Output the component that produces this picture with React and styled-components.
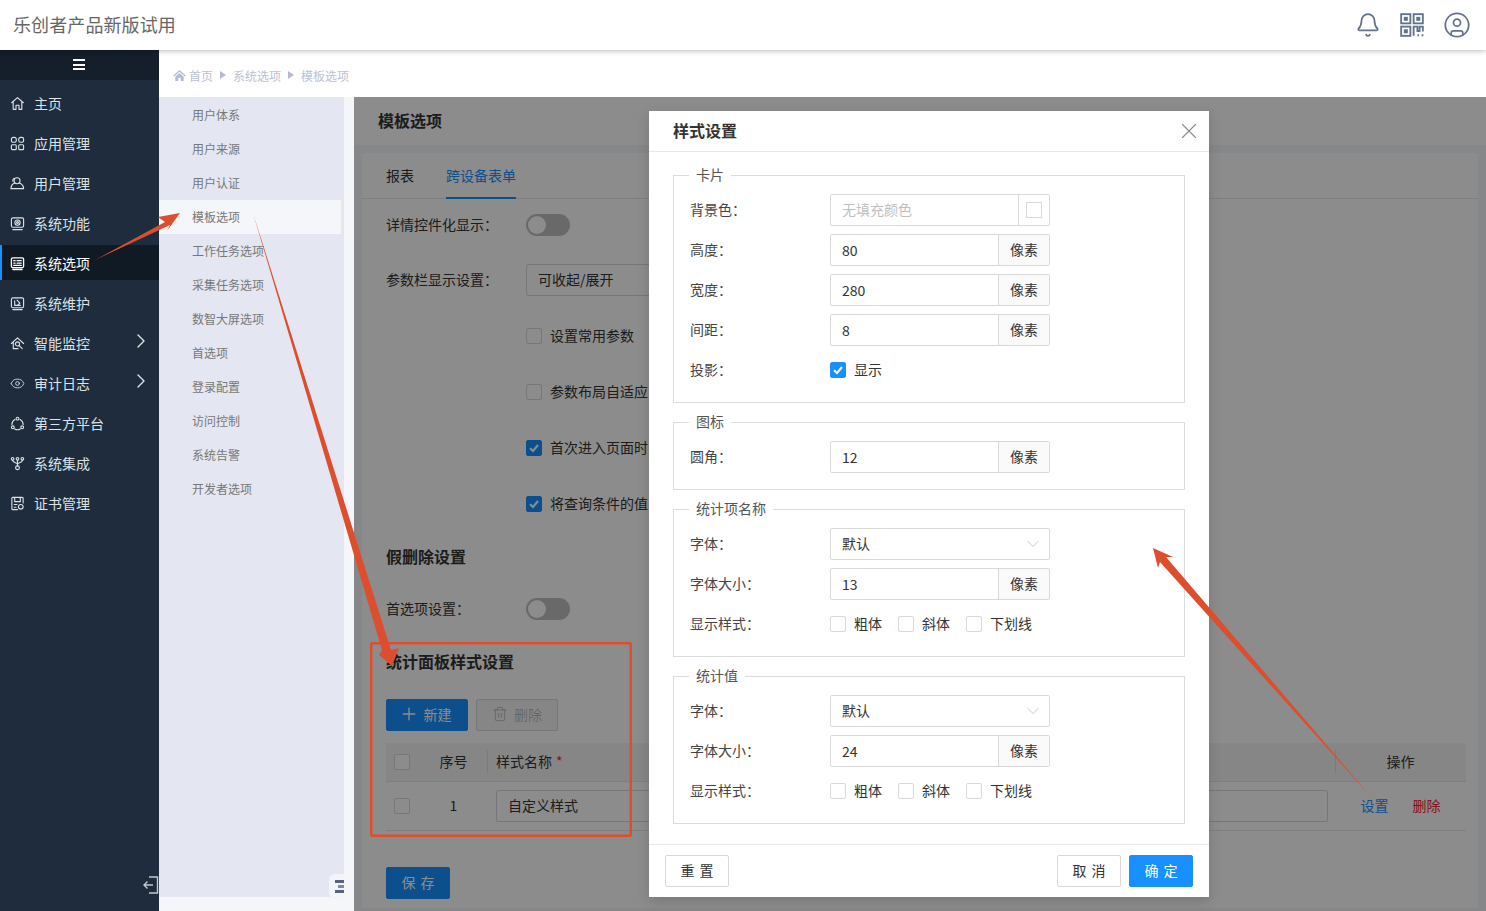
import React from "react";
import styled, { createGlobalStyle } from "styled-components";
import { Bell, CircleUser, Eye, Plus, Trash2, X, ChevronDown, ChevronRight } from "lucide-react";

const Global = createGlobalStyle`
  html, body { margin: 0; padding: 0; height: 100%; overflow: hidden; background: #fff; }
  body, button, input { font-family: "Noto Sans CJK SC", "Noto Sans", sans-serif; font-size: 14px; }
  * { box-sizing: border-box; }
`;

const Page = styled.div`
  position: relative;
  width: 1486px;
  height: 911px;
  display: flex;
  flex-direction: column;
  overflow: hidden;
`;
const Header = styled.header`
  position: relative;
  z-index: 3;
  height: 50px;
  flex: none;
  background: #fff;
  box-shadow: 0 1px 5px rgba(0, 0, 0, 0.28);
  display: flex;
  align-items: center;
  justify-content: space-between;
  padding: 0 15px 0 13px;
`;
const AppTitle = styled.div`
  font-size: 18px;
  color: #666;
  padding-bottom: 2px;
  letter-spacing: 0.1px;
`;
const HeaderIcons = styled.div`
  display: flex;
  align-items: center;
  gap: 18px;
  color: #62728a;
`;
const Body = styled.div`
  flex: 1;
  display: flex;
  min-height: 0;
`;
const Sidebar = styled.aside`
  position: relative;
  width: 159px;
  flex: none;
  background: #1e2c3d;
  display: flex;
  flex-direction: column;
`;
const BurgerBar = styled.div`
  height: 30px;
  background: #141f2b;
  display: flex;
  flex-direction: column;
  align-items: center;
  justify-content: center;
  gap: 2.5px;
  margin-bottom: 3px;
  padding: 0 1px 1px 0;
  span { display: block; width: 12px; height: 2px; background: #fff; }
`;
const MenuItem = styled.div`
  display: flex;
  align-items: center;
  gap: 9px;
  padding-left: ${(p) => (p.$active ? "8px" : "10px")};
  height: ${(p) => (p.$active ? "35px" : "40px")};
  margin: ${(p) => (p.$active ? "2px 0 3px" : "0")};
  padding-top: ${(p) => (p.$active ? "1px" : "0")};
  color: ${(p) => (p.$active ? "#fff" : "#dde3e9")};
  background: ${(p) => (p.$active ? "#101a24" : "transparent")};
  border-left: ${(p) => (p.$active ? "2px solid #1890ff" : "none")};
  position: relative;
  svg { flex: none; }
`;
const MenuArrow = styled.span`
  position: absolute;
  right: 6px;
  top: 6px;
  display: flex;
  color: #dde3e9;
`;
const Collapse = styled.span`
  position: absolute;
  right: 0;
  bottom: 17px;
  display: flex;
  color: #c4c8cd;
`;
const Workspace = styled.div`
  flex: 1;
  display: flex;
  flex-direction: column;
  min-width: 0;
`;
const Crumbs = styled.nav`
  height: 47px;
  flex: none;
  background: #fff;
  display: flex;
  align-items: center;
  padding: 3px 0 0 14px;
  font-size: 12px;
  color: #bcc1d3;
`;
const CrumbSep = styled.span`
  width: 0;
  height: 0;
  margin: 0 7px;
  border-left: 6px solid #b4bad0;
  border-top: 4px solid transparent;
  border-bottom: 4px solid transparent;
`;
const CrumbHome = styled.span`
  display: flex;
  margin-right: 3px;
  color: #b4bad0;
`;
const WorkRow = styled.div`
  flex: 1;
  display: flex;
  background: #f5f6fa;
  min-height: 0;
`;
const SubNav = styled.div`
  position: relative;
  width: 185px;
  flex: none;
  margin: 0 10px 14px 0;
  background: #e4e7f1;
  padding: 1px 3px 0 0;
`;
const SubItem = styled.div`
  height: 34px;
  display: flex;
  align-items: center;
  padding: 0 0 1px 33px;
  font-size: 12px;
  color: #777;
  background: ${(p) => (p.$active ? "#f5f6fa" : "transparent")};
`;
const SubToggle = styled.div`
  position: absolute;
  right: 0;
  bottom: -2px;
  width: 15px;
  height: 25px;
  background: #f3f4f9;
  border-radius: 6px 0 0 6px;
  display: flex;
  flex-direction: column;
  justify-content: center;
  align-items: flex-end;
  gap: 2.5px;
  span { display: block; height: 2.5px; width: 9px; background: #56637a; }
  span:nth-child(2) { width: 6px; background: #7f8aa0; }
`;
const Main = styled.main`
  position: relative;
  flex: 1;
  min-width: 0;
  display: flex;
  flex-direction: column;
`;
const PageHead = styled.div`
  height: 48px;
  flex: none;
  background: #fff;
  display: flex;
  align-items: center;
  padding: 0 0 2px 24px;
  font-size: 16px;
  font-weight: 700;
  color: #333;
`;
const Card = styled.section`
  flex: 1;
  margin: 8px 8px 3px;
  padding: 0 12px 0 24px;
  background: #fff;
  border-radius: 4px;
  color: #333;
`;
const Tabs = styled.div`
  height: 46px;
  margin: 0 -12px 10px -24px;
  padding-left: 24px;
  display: flex;
  gap: 32px;
  border-bottom: 1px solid #e8e8e8;
`;
const Tab = styled.div`
  height: 46px;
  padding-top: 11px;
  line-height: 22px;
  color: ${(p) => (p.$active ? "#1890ff" : "#333")};
  border-bottom: ${(p) => (p.$active ? "2px solid #1890ff" : "none")};
`;
const FormRow = styled.div`
  display: flex;
  align-items: center;
  height: 32px;
  margin-bottom: ${(p) => p.$gap ?? 24}px;
  padding-left: ${(p) => (p.$indent ? "140px" : "0")};
  white-space: nowrap;
`;
const RowLabel = styled.span`
  width: 140px;
  flex: none;
  padding-bottom: 2px;
`;
const Toggle = styled.span`
  position: relative;
  width: 44px;
  height: 22px;
  border-radius: 11px;
  background: #bfbfbf;
  &::after {
    content: "";
    position: absolute;
    left: 2px;
    top: 2px;
    width: 18px;
    height: 18px;
    border-radius: 50%;
    background: #fff;
  }
`;
const PageSelect = styled.div`
  width: 300px;
  height: 32px;
  padding: 0 0 2px 11px;
  display: flex;
  align-items: center;
  border: 1px solid #d9d9d9;
  border-radius: 2px;
`;
const Box = styled.span`
  width: 16px;
  height: 16px;
  flex: none;
  display: inline-flex;
  align-items: center;
  justify-content: center;
  border: 1px solid ${(p) => (p.$on ? "#1890ff" : "#d9d9d9")};
  border-radius: 2px;
  background: ${(p) => (p.$on ? "#1890ff" : "#fff")};
`;
const CheckLabel = styled.span`
  display: inline-flex;
  align-items: center;
  gap: 8px;
  padding-bottom: 2px;
  ${Box} { margin-top: 2px; }
`;
const Heading = styled.h3`
  margin: 0 0 ${(p) => p.$after}px;
  height: 24px;
  line-height: 22px;
  font-size: 16px;
  font-weight: 700;
  color: #333;
`;
const Toolbar = styled.div`
  display: flex;
  gap: 8px;
  margin-bottom: 12px;
`;
const Btn = styled.button`
  height: 32px;
  width: ${(p) => p.$w}px;
  padding: 0 ${(p) => p.$right ?? 0}px 2px 0;
  display: inline-flex;
  align-items: center;
  justify-content: center;
  gap: ${(p) => p.$gap ?? 0}px;
  border-radius: 2px;
  word-spacing: 2px;
  border: 1px solid ${(p) => (p.$primary ? "#1890ff" : "#d9d9d9")};
  background: ${(p) => (p.$primary ? "#1890ff" : p.$disabled ? "#f5f5f5" : "#fff")};
  color: ${(p) => (p.$primary ? "#fff" : p.$disabled ? "rgba(0,0,0,.25)" : "#333")};
`;
const TableRow = styled.div`
  display: grid;
  grid-template-columns: 34px 67px 1fr 131px;
  align-items: center;
  height: ${(p) => (p.$head ? "39px" : "49px")};
  background: ${(p) => (p.$head ? "#f5f5f5" : "transparent")};
  border-bottom: 1px solid #e8e8e8;
`;
const CheckCell = styled.div`
  padding-left: 8px;
  display: flex;
`;
const IndexCell = styled.div`
  text-align: center;
  padding-bottom: 2px;
`;
const NameCell = styled.div`
  position: relative;
  padding: 0 7px ${(p) => (p.$head ? "2px" : "0")} 9px;
  &::before {
    content: ${(p) => (p.$head ? '""' : "none")};
    position: absolute;
    left: 0;
    top: -1px;
    width: 1px;
    height: 23px;
    background: #e0e0e0;
  }
`;
const Required = styled.span`
  color: #f5222d;
  margin-left: 4px;
`;
const ActionHead = styled.div`
  position: relative;
  text-align: center;
  padding-bottom: 2px;
  &::before {
    content: "";
    position: absolute;
    left: 0;
    top: -1px;
    width: 1px;
    height: 23px;
    background: #e0e0e0;
  }
`;
const Actions = styled.div`
  display: flex;
  justify-content: center;
  gap: 24px;
  padding-bottom: 2px;
`;
const LinkText = styled.span`
  color: ${(p) => (p.$danger ? "#f5222d" : "#1890ff")};
`;
const NameInput = styled.div`
  height: 32px;
  padding: 0 0 2px 11px;
  display: flex;
  align-items: center;
  border: 1px solid #d9d9d9;
  border-radius: 2px;
`;
const SaveRow = styled.div`
  margin-top: 36px;
`;
const Mask = styled.div`
  position: absolute;
  inset: 0;
  background: rgba(0, 0, 0, 0.45);
`;
const Modal = styled.div`
  position: absolute;
  left: 295px;
  top: 14px;
  width: 560px;
  height: 786px;
  background: #fff;
  box-shadow: 0 4px 12px rgba(0, 0, 0, 0.15);
  display: flex;
  flex-direction: column;
  color: #333;
`;
const ModalHead = styled.div`
  height: 41px;
  flex: none;
  padding: 0 7px 2px 24px;
  display: flex;
  align-items: center;
  justify-content: space-between;
  border-bottom: 1px solid #e8e8e8;
  font-size: 16px;
  font-weight: 700;
  color: #333;
  svg { color: #8c8c8c; margin-top: 2px; }
`;
const ModalBody = styled.div`
  flex: 1;
  padding: 13px 24px 0;
`;
const Group = styled.fieldset`
  margin: 0 0 9px;
  padding: 9px 16px 16px;
  min-width: 0;
  border: 1px solid #dcdcdc;
  display: flex;
  flex-direction: column;
  gap: 8px;
`;
const GroupTitle = styled.legend`
  margin-left: -1px;
  padding: 0 7px;
  line-height: 18px;
  height: 20px;
  color: #555;
`;
const FieldRow = styled.div`
  display: flex;
  align-items: center;
  height: 32px;
`;
const FieldLabel = styled.span`
  width: 140px;
  flex: none;
  color: #444;
  padding-bottom: 2px;
`;
const InputGroup = styled.div`
  width: 220px;
  height: 32px;
  display: flex;
  border: 1px solid #d9d9d9;
  border-radius: 2px;
`;
const InputText = styled.div`
  flex: 1;
  padding: 0 6px ${(p) => (p.$raised ? "2px" : "0")} 11px;
  color: ${(p) => (p.$placeholder ? "#bfbfbf" : "#333")};
  display: flex;
  justify-content: space-between;
  align-items: center;
  svg { color: #bfbfbf; margin-top: 2px; }
`;
const Unit = styled.div`
  width: 51px;
  flex: none;
  text-align: center;
  line-height: 28px;
  background: #fafafa;
  border-left: 1px solid #d9d9d9;
  color: #333;
`;
const Swatch = styled.div`
  width: 31px;
  flex: none;
  display: flex;
  align-items: center;
  justify-content: center;
  border-left: 1px solid #d9d9d9;
  span { width: 16px; height: 16px; border: 1px solid #d9d9d9; }
`;
const CheckGroup = styled.div`
  display: flex;
  gap: 16px;
`;
const ModalFoot = styled.div`
  height: 53px;
  flex: none;
  padding: 10px 16px;
  display: flex;
  align-items: center;
  border-top: 1px solid #e8e8e8;
  gap: 8px;
`;
const Spacer = styled.div`
  flex: 1;
`;
const Annotations = styled.svg`
  position: absolute;
  left: 0;
  top: 0;
  z-index: 5;
  pointer-events: none;
`;

const Ico = ({ children, size = 15, sw = 1.2 }) => (
  <svg width={size} height={size} viewBox="0 0 16 16" fill="none" stroke="currentColor" strokeWidth={sw} strokeLinecap="round" strokeLinejoin="round">
    {children}
  </svg>
);

const Check = () => (
  <svg width="12" height="12" viewBox="0 0 12 12" fill="none" stroke="#fff" strokeWidth="2">
    <path d="M2 6.2 5 9l5-6" />
  </svg>
);

const menu = [
  ["主页", <Ico key="a"><path d="M1.800 7.200 8 1.800l6.200 5.400M3.400 6.200v8h3v-4.400h3.200v4.400h3v-8" /></Ico>],
  ["应用管理", <Ico key="b"><rect x="1.500" y="1.500" width="5.200" height="5.200" rx="2" /><rect x="9.300" y="1.500" width="5.200" height="5.200" rx="2" /><rect x="1.500" y="9.300" width="5.200" height="5.200" rx="1" /><rect x="9.300" y="9.300" width="5.200" height="5.200" rx="1" /></Ico>],
  ["用户管理", <Ico key="c"><circle cx="7.500" cy="5" r="3.200" /><path d="M5 7.500C2.500 8.500 1 10.500 1 13.500h13.500c0-3-1.800-5-4.500-6" /><path d="M4.500 2.500C3.300 3 2.800 4 3 5.500" /></Ico>],
  ["系统功能", <Ico key="d"><rect x="1.500" y="2" width="13" height="10" rx="1.500" /><circle cx="8" cy="7" r="2.800" /><circle cx="8" cy="7" r="1" /><path d="M3 14.500h10" /></Ico>],
  ["系统选项", <Ico key="e" sw={1.4}><rect x="1.500" y="2" width="13" height="10.500" rx="1.500" /><path d="M4 5h1.500M4 7.500h1.500M7.500 5h4.500M7.500 7.500h4.500M4 10h8" /><path d="M3 14.500h10" /></Ico>],
  ["系统维护", <Ico key="f"><rect x="1.500" y="2" width="13" height="10.500" rx="1.500" /><path d="M5 5v5h6M7.500 4.500l3 3-2 2" /><path d="M3 14.500h10" /></Ico>],
  ["智能监控", <Ico key="g"><path d="M1.500 8 8 2l6.500 6M3.500 7v6.500h5" /><circle cx="8" cy="8.500" r="2.200" /><path d="m9.800 10.300 3.200 3.200" /></Ico>, true],
  ["审计日志", <Eye key="h" size={15} strokeWidth={1.400} />, true],
  ["第三方平台", <Ico key="i"><circle cx="8" cy="2.800" r="1.500" /><circle cx="3" cy="12" r="1.500" /><circle cx="13" cy="12" r="1.500" /><path d="M5.300 3.800A6 6 0 0 0 2 9M10.700 3.800A6 6 0 0 1 14 9M5 13.800a6 6 0 0 0 6 0" /></Ico>],
  ["系统集成", <Ico key="j"><circle cx="2.800" cy="3" r="1.400" /><circle cx="8" cy="3" r="1.400" /><circle cx="13.200" cy="3" r="1.400" /><circle cx="8" cy="12.500" r="2" /><path d="M8 4.500v6M2.800 4.500c0 3 5.200 2.500 5.200 4.500 0-2 5.200-1.500 5.200-4.500" /></Ico>],
  ["证书管理", <Ico key="k"><path d="M14 7.500V2.500a1 1 0 0 0-1-1H3a1 1 0 0 0-1 1v11a1 1 0 0 0 1 1h5" /><path d="M5 1.800v4.200h6V1.800M4.500 9h3M4.500 12h2" /><circle cx="11.500" cy="11.500" r="2.500" /></Ico>],
];

const subs = ["用户体系", "用户来源", "用户认证", "模板选项", "工作任务选项", "采集任务选项", "数智大屏选项", "首选项", "登录配置", "访问控制", "系统告警", "开发者选项"];

const Num = ({ label, value }) => (
  <FieldRow>
    <FieldLabel>{label}：</FieldLabel>
    <InputGroup>
      <InputText>{value}</InputText>
      <Unit>像素</Unit>
    </InputGroup>
  </FieldRow>
);

const FontSelect = () => (
  <FieldRow>
    <FieldLabel>字体：</FieldLabel>
    <InputGroup>
      <InputText $raised>默认<ChevronDown size={20} strokeWidth={1} /></InputText>
    </InputGroup>
  </FieldRow>
);

const StyleChecks = () => (
  <FieldRow>
    <FieldLabel>显示样式：</FieldLabel>
    <CheckGroup>
      <CheckLabel><Box />粗体</CheckLabel>
      <CheckLabel><Box />斜体</CheckLabel>
      <CheckLabel><Box />下划线</CheckLabel>
    </CheckGroup>
  </FieldRow>
);

export default function App() {
  return (
    <Page>
      <Global />
      <Header>
        <AppTitle>乐创者产品新版试用</AppTitle>
        <HeaderIcons>
          <Bell size={26} strokeWidth={1.600} />
          <svg width="26" height="26" viewBox="0 0 24 24" fill="none" stroke="currentColor" strokeWidth="1.700">
            <rect x="2" y="2" width="8.500" height="8.500" /><rect x="13.500" y="2" width="8.500" height="8.500" /><rect x="2" y="13.500" width="8.500" height="8.500" />
            <rect x="5.300" y="5.300" width="2" height="2" fill="currentColor" /><rect x="16.800" y="5.300" width="2" height="2" fill="currentColor" /><rect x="5.300" y="16.800" width="2" height="2" fill="currentColor" />
            <path d="M13.500 22v-8.500h3.500v4h2v-4h3v4.500M17 21.500h1.500M21 21.500h1.500" />
          </svg>
          <CircleUser size={28} strokeWidth={1.500} />
        </HeaderIcons>
      </Header>
      <Body>
        <Sidebar>
          <BurgerBar><span /><span /><span /></BurgerBar>
          {menu.map(([text, icon, more]) => (
            <MenuItem key={text} $active={text === "系统选项"}>
              {icon}
              {text}
              {more && <MenuArrow><ChevronRight size={24} strokeWidth={1.400} /></MenuArrow>}
            </MenuItem>
          ))}
          <Collapse>
            <svg width="16" height="18" viewBox="0 0 16 18" fill="none" stroke="currentColor" strokeWidth="1.400">
              <path d="M6 1h8.500v16H6M1 9h9M4.500 5.500 1 9l3.500 3.500" />
            </svg>
          </Collapse>
        </Sidebar>
        <Workspace>
          <Crumbs>
            <CrumbHome>
              <svg width="13" height="13" viewBox="0 0 13 13" fill="currentColor">
                <path d="M6.500 1 0.300 6.500l.8.900L6.500 2.700l5.400 4.700.8-.9z" />
                <path d="M2.300 7.700 6.500 4l4.200 3.700V12H7.800V8.800H5.200V12H2.300z" />
              </svg>
            </CrumbHome>
            首页<CrumbSep />系统选项<CrumbSep />模板选项
          </Crumbs>
          <WorkRow>
            <SubNav>
              {subs.map((s) => (
                <SubItem key={s} $active={s === "模板选项"}>{s}</SubItem>
              ))}
              <SubToggle><span /><span /><span /></SubToggle>
            </SubNav>
            <Main>
              <PageHead>模板选项</PageHead>
              <Card>
                <Tabs>
                  <Tab>报表</Tab>
                  <Tab $active>跨设备表单</Tab>
                </Tabs>
                <FormRow $gap={23}><RowLabel>详情控件化显示：</RowLabel><Toggle /></FormRow>
                <FormRow><RowLabel>参数栏显示设置：</RowLabel><PageSelect>可收起/展开</PageSelect></FormRow>
                <FormRow $indent><CheckLabel><Box />设置常用参数</CheckLabel></FormRow>
                <FormRow $indent><CheckLabel><Box />参数布局自适应</CheckLabel></FormRow>
                <FormRow $indent><CheckLabel><Box $on><Check /></Box>首次进入页面时</CheckLabel></FormRow>
                <FormRow $indent $gap={25}><CheckLabel><Box $on><Check /></Box>将查询条件的值</CheckLabel></FormRow>
                <Heading $after={24}>假删除设置</Heading>
                <FormRow $gap={25}><RowLabel>首选项设置：</RowLabel><Toggle /></FormRow>
                <Heading $after={25}>统计面板样式设置</Heading>
                <Toolbar>
                  <Btn $primary $w={82} $gap={5} $right={4}><Plus size={20} strokeWidth={1.600} />新建</Btn>
                  <Btn $disabled $w={82} $gap={6}><Trash2 size={16} strokeWidth={1.300} />删除</Btn>
                </Toolbar>
                <TableRow $head>
                  <CheckCell><Box /></CheckCell>
                  <IndexCell>序号</IndexCell>
                  <NameCell $head>样式名称<Required>*</Required></NameCell>
                  <ActionHead>操作</ActionHead>
                </TableRow>
                <TableRow>
                  <CheckCell><Box /></CheckCell>
                  <IndexCell>1</IndexCell>
                  <NameCell><NameInput>自定义样式</NameInput></NameCell>
                  <Actions><LinkText>设置</LinkText><LinkText $danger>删除</LinkText></Actions>
                </TableRow>
                <SaveRow><Btn $primary $w={64}>保 存</Btn></SaveRow>
              </Card>
              <Mask />
              <Modal>
                <ModalHead>样式设置<X size={26} strokeWidth={1} /></ModalHead>
                <ModalBody>
                  <Group>
                    <GroupTitle>卡片</GroupTitle>
                    <FieldRow>
                      <FieldLabel>背景色：</FieldLabel>
                      <InputGroup>
                        <InputText $placeholder $raised>无填充颜色</InputText>
                        <Swatch><span /></Swatch>
                      </InputGroup>
                    </FieldRow>
                    <Num label="高度" value="80" />
                    <Num label="宽度" value="280" />
                    <Num label="间距" value="8" />
                    <FieldRow>
                      <FieldLabel>投影：</FieldLabel>
                      <CheckLabel><Box $on><Check /></Box>显示</CheckLabel>
                    </FieldRow>
                  </Group>
                  <Group>
                    <GroupTitle>图标</GroupTitle>
                    <Num label="圆角" value="12" />
                  </Group>
                  <Group>
                    <GroupTitle>统计项名称</GroupTitle>
                    <FontSelect />
                    <Num label="字体大小" value="13" />
                    <StyleChecks />
                  </Group>
                  <Group>
                    <GroupTitle>统计值</GroupTitle>
                    <FontSelect />
                    <Num label="字体大小" value="24" />
                    <StyleChecks />
                  </Group>
                </ModalBody>
                <ModalFoot>
                  <Btn $w={64}>重 置</Btn>
                  <Spacer />
                  <Btn $w={64}>取 消</Btn>
                  <Btn $primary $w={64}>确 定</Btn>
                </ModalFoot>
              </Modal>
            </Main>
          </WorkRow>
        </Workspace>
      </Body>
      <Annotations width="1486" height="911" viewBox="0 0 1486 911">
        <g fill="#dd4e2f">
          <polygon points="180,213 158,217 165,222 95,260 170,225 167,231" />
          <polygon points="253,213 391,650 399,648 392,666 379,655 382,650" />
          <polygon points="1153,548 1173,557 1166,557 1372,798 1160,562 1158,568" />
        </g>
        <rect x="371.250" y="643.250" width="259.500" height="192.500" rx="1" fill="none" stroke="#dd4e2f" strokeWidth="2.500" />
      </Annotations>
    </Page>
  );
}
